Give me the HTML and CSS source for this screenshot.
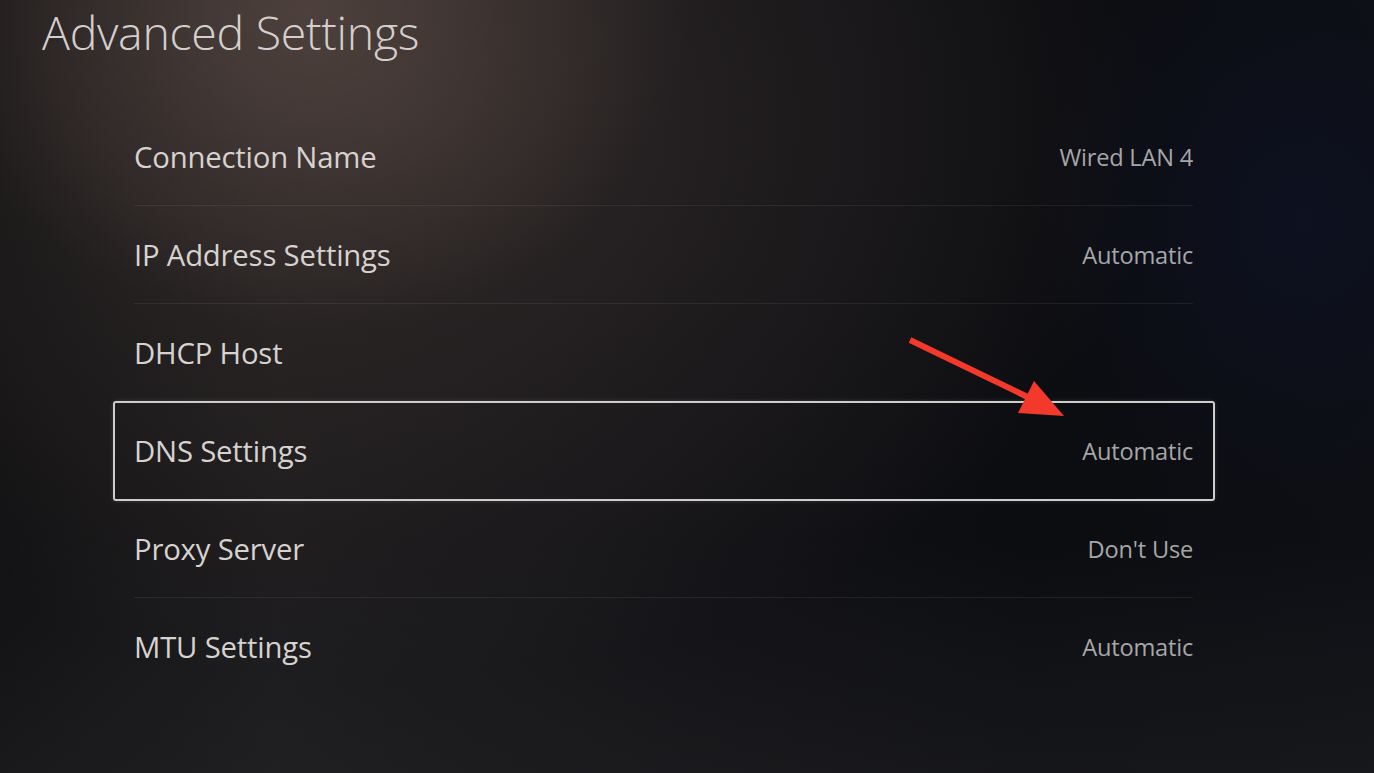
FILE: index.html
```html
<!DOCTYPE html>
<html lang="en">
<head>
  <meta charset="utf-8">
  <title>Advanced Settings</title>
  <link rel="stylesheet" href="styles.css">
</head>
<body>
  <!-- HEADER -->
  <h1 class="title">Advanced Settings</h1>

  <!-- SETTINGS LIST -->
  <ul class="list">
    <li class="row"><div class="row-in"><span class="label">Connection Name</span><span class="value">Wired LAN 4</span></div></li>
    <li class="row"><div class="row-in"><span class="label">IP Address Settings</span><span class="value">Automatic</span></div></li>
    <li class="row"><div class="row-in"><span class="label">DHCP Host</span><span class="value"></span></div></li>
    <li class="row selected"><div class="row-in"><span class="label">DNS Settings</span><span class="value">Automatic</span></div></li>
    <li class="row"><div class="row-in"><span class="label">Proxy Server</span><span class="value">Don't Use</span></div></li>
    <li class="row"><div class="row-in"><span class="label">MTU Settings</span><span class="value">Automatic</span></div></li>
  </ul>

  <!-- annotation arrow -->
  <svg class="arrow" width="1374" height="773" viewBox="0 0 1374 773">
    <line x1="910" y1="340" x2="1036" y2="401" stroke="#f2392c" stroke-width="6"/>
    <polygon points="1034,381 1018,413 1064,416" fill="#f2392c"/>
  </svg>
</body>
</html>
```
FILE: styles.css
```css
/* --- Layout & Basics --- */
*{box-sizing:border-box}
html,body{height:100%}
body{
  margin:0;height:773px;overflow:hidden;position:relative;
  font-family:"Open Sans",sans-serif;color:#d6d2d0;
  background:
    radial-gradient(ellipse 380px 320px at 310px 10px,rgba(92,76,70,.7),rgba(92,76,70,0) 100%),
    radial-gradient(ellipse 760px 560px at 400px 120px,rgba(60,50,47,.65),rgba(60,50,47,0) 100%),
    radial-gradient(ellipse 260px 300px at 1300px 220px,rgba(12,18,40,.6),rgba(12,18,40,0) 100%),
    linear-gradient(180deg,rgba(0,0,0,0) 70%,rgba(40,40,42,.35) 100%),
    linear-gradient(90deg,#111113 0,#1b1a1c 20%,#121216 50%,#0c0d11 75%,#0e0f14 100%);
}

/* --- Header --- */
.title{margin:0;padding:0 0 0 42px;height:64px;font-size:46.5px;font-weight:300;line-height:64px;color:#d4cfcd;letter-spacing:-.3px}

/* --- List --- */
.list{list-style:none;margin:44px 0 0 113px;padding:0;width:1102px}
.row{height:98px;padding:0 22px 0 21px}
.row-in{height:100%;display:flex;align-items:center;justify-content:space-between;border-bottom:1px solid rgba(255,255,255,.07);padding-top:1px}
.row:nth-child(3) .row-in,.row.selected .row-in,.row:last-child .row-in{border-bottom-color:transparent}
.label{font-size:29.3px;font-weight:400;color:#d6d2d0;letter-spacing:-.2px}
.value{font-size:23.6px;color:#a6a6a9;letter-spacing:-.2px}

/* --- Selected --- */
.row.selected{border:2px solid #cfcdcc;border-radius:3px;height:100px;margin:-1px 0 -1px;padding:0 20px 0 19px;box-shadow:0 0 4px rgba(255,255,255,.15)}

/* --- Annotation --- */
.arrow{position:absolute;left:0;top:0;pointer-events:none}
```
